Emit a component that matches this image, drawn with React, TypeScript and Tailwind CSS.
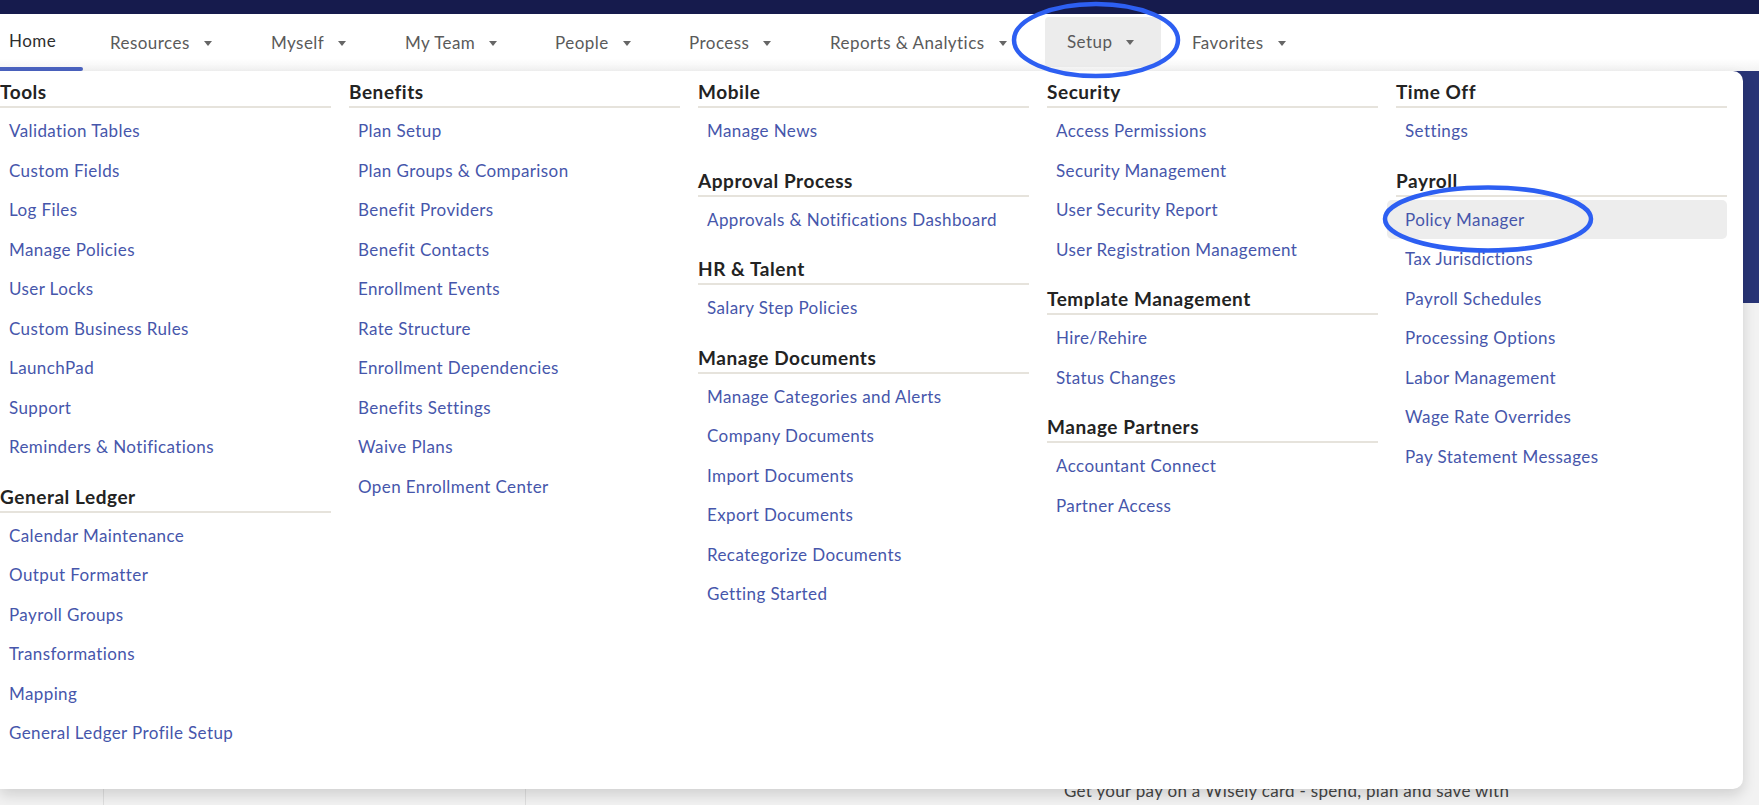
import React from 'react';

type Section = { title: string; items: string[] };

const columns: Section[][] = [
  [
    {
      title: 'Tools',
      items: [
        'Validation Tables',
        'Custom Fields',
        'Log Files',
        'Manage Policies',
        'User Locks',
        'Custom Business Rules',
        'LaunchPad',
        'Support',
        'Reminders & Notifications',
      ],
    },
    {
      title: 'General Ledger',
      items: [
        'Calendar Maintenance',
        'Output Formatter',
        'Payroll Groups',
        'Transformations',
        'Mapping',
        'General Ledger Profile Setup',
      ],
    },
  ],
  [
    {
      title: 'Benefits',
      items: [
        'Plan Setup',
        'Plan Groups & Comparison',
        'Benefit Providers',
        'Benefit Contacts',
        'Enrollment Events',
        'Rate Structure',
        'Enrollment Dependencies',
        'Benefits Settings',
        'Waive Plans',
        'Open Enrollment Center',
      ],
    },
  ],
  [
    { title: 'Mobile', items: ['Manage News'] },
    { title: 'Approval Process', items: ['Approvals & Notifications Dashboard'] },
    { title: 'HR & Talent', items: ['Salary Step Policies'] },
    {
      title: 'Manage Documents',
      items: [
        'Manage Categories and Alerts',
        'Company Documents',
        'Import Documents',
        'Export Documents',
        'Recategorize Documents',
        'Getting Started',
      ],
    },
  ],
  [
    {
      title: 'Security',
      items: ['Access Permissions', 'Security Management', 'User Security Report', 'User Registration Management'],
    },
    { title: 'Template Management', items: ['Hire/Rehire', 'Status Changes'] },
    { title: 'Manage Partners', items: ['Accountant Connect', 'Partner Access'] },
  ],
  [
    { title: 'Time Off', items: ['Settings'] },
    {
      title: 'Payroll',
      items: [
        'Policy Manager',
        'Tax Jurisdictions',
        'Payroll Schedules',
        'Processing Options',
        'Labor Management',
        'Wage Rate Overrides',
        'Pay Statement Messages',
      ],
    },
  ],
];

const Caret = () => (
  <svg width="8" height="5" viewBox="0 0 8 5" className="ml-[14px] mt-[1px] shrink-0">
    <path d="M0 0 L8 0 L4 5 Z" fill="#666" />
  </svg>
);

const navItems = [
  { label: 'Resources', w: 'w-[161px]' },
  { label: 'Myself', w: 'w-[134px]' },
  { label: 'My Team', w: 'w-[150px]' },
  { label: 'People', w: 'w-[134px]' },
  { label: 'Process', w: 'w-[141px]' },
  { label: 'Reports & Analytics', w: 'w-[237px]' },
];

export default function App() {
  return (
    <div className="relative w-[1759px] h-[805px] overflow-hidden bg-[#f2f2f2] font-['Lato','Open_Sans',sans-serif]">
      {/* top brand strip */}
      <div className="h-[14px] bg-[#161b4d]" />

      {/* main nav */}
      <nav className="h-[57px] flex bg-[linear-gradient(to_bottom,#ffffff_78%,#f3f3f3)] text-[17px] tracking-[0.45px] text-[#5a5a5a]">
        <div className="w-[88px] flex flex-col">
          <div className="flex-1 flex items-center pl-[9px] text-[#2e2e2e]">Home</div>
          <div className="h-[4px] w-[83px] rounded-r-full bg-[#4b63c0]" />
        </div>
        {navItems.map((n) => (
          <div key={n.label} className={`${n.w} pl-[22px] flex items-center whitespace-nowrap`}>
            {n.label}
            <Caret />
          </div>
        ))}
        <div className="w-[116px] h-[50px] mt-[3px] pl-[22px] flex items-center rounded-[4px] bg-[#ececec]">
          Setup
          <Caret />
        </div>
        <div className="pl-[31px] flex items-center">
          Favorites
          <Caret />
        </div>
      </nav>

      {/* page behind the menu */}
      <div className="h-[232px] bg-[#283476]" />
      <div className="flex h-[502px]">
        <div className="w-[104px] border-r border-[#dedede]" />
        <div className="w-[422px] border-r border-[#dedede]" />
        <div className="flex-1 pl-[538px] pt-[477px]">
          <p className="text-[17px] leading-[21px] tracking-[0.3px] text-[#444] w-[525px]">
            Get your pay on a Wisely card - spend, plan and save with confidence
          </p>
        </div>
      </div>

      {/* setup mega menu */}
      <div className="absolute top-[71px] left-0 w-[1743px] h-[718px] bg-white rounded-r-[10px] shadow-[0_6px_14px_rgba(0,0,0,0.14)] pt-[10px] pr-[16px]">
        <div className="grid grid-cols-[repeat(5,331px)] gap-x-[18px]">
          {columns.map((col, ci) => (
            <div key={ci}>
              {col.map((sec, si) => (
                <div key={sec.title} className={si > 0 ? 'mt-[19px]' : ''}>
                  <div className="text-[19px] leading-[22px] font-bold tracking-[0.55px] text-[#232323] pb-[3px] border-b-2 border-[#e6e3dc]">
                    {sec.title}
                  </div>
                  <div className="mt-[3px]">
                    {sec.items.map((it) => (
                      <div
                        key={it}
                        className={`h-[39.5px] flex items-center text-[17px] tracking-[0.4px] text-[#4656ab] whitespace-nowrap ${
                          it === 'Policy Manager' ? '-ml-[9px] pl-[18px] rounded-[5px] bg-[#ededed]' : 'pl-[9px]'
                        }`}
                      >
                        {it}
                      </div>
                    ))}
                  </div>
                </div>
              ))}
            </div>
          ))}
        </div>
      </div>

      {/* annotation rings */}
      <svg className="absolute left-[1010px] top-0 pointer-events-none" width="172" height="80" viewBox="0 0 172 80">
        <ellipse cx="86" cy="40" rx="82" ry="36" fill="none" stroke="#2d5ff2" strokeWidth="4.5" />
      </svg>
      <svg className="absolute left-[1381px] top-[184px] pointer-events-none" width="214" height="70" viewBox="0 0 214 70">
        <ellipse cx="107" cy="35" rx="103" ry="31.5" fill="none" stroke="#2d5ff2" strokeWidth="4.5" />
      </svg>
    </div>
  );
}
